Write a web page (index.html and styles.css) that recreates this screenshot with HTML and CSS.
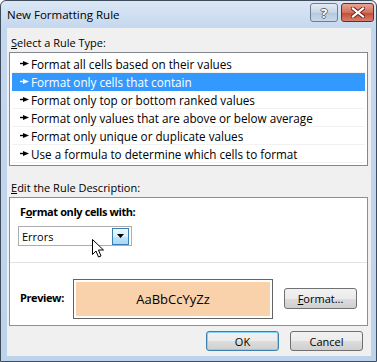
FILE: index.html
```html
<!DOCTYPE html>
<html lang="en">

<head>
    <meta charset="utf-8">
    <title>New Formatting Rule</title>
    <link rel="stylesheet" href="styles.css">
</head>

<body>

    <div class="window">
        <div class="titlebar">
            <span class="title">New Formatting Rule</span>
            <div class="caption-btns">
                <div class="cap help">?</div>
                <div class="cap close">
                    <svg width="14" height="11" viewBox="0 0 14 11">
                        <path d="M2 1.5 L12 9.5 M12 1.5 L2 9.5" stroke="#6b2020" stroke-width="4" stroke-linecap="square" />
                        <path d="M2 1.5 L12 9.5 M12 1.5 L2 9.5" stroke="#ffffff" stroke-width="2.2" stroke-linecap="square" />
                    </svg>
                </div>
            </div>
        </div>

        <div class="client">
            <div class="group-label"><u>S</u>elect a Rule Type:</div>
            <ul class="rule-list">
                <li><svg class="bullet" width="9" height="5" viewBox="0 0 9 5"><path d="M0 2.5 H4" stroke="currentColor" stroke-width="1.4" /><path d="M3 0 L9 2.5 L3 5 Z" fill="currentColor" /></svg>Format all cells based on their values</li>
                <li class="selected"><svg class="bullet" width="9" height="5" viewBox="0 0 9 5"><path d="M0 2.5 H4" stroke="currentColor" stroke-width="1.4" /><path d="M3 0 L9 2.5 L3 5 Z" fill="currentColor" /></svg>Format only cells that contain</li>
                <li><svg class="bullet" width="9" height="5" viewBox="0 0 9 5"><path d="M0 2.5 H4" stroke="currentColor" stroke-width="1.4" /><path d="M3 0 L9 2.5 L3 5 Z" fill="currentColor" /></svg>Format only top or bottom ranked values</li>
                <li><svg class="bullet" width="9" height="5" viewBox="0 0 9 5"><path d="M0 2.5 H4" stroke="currentColor" stroke-width="1.4" /><path d="M3 0 L9 2.5 L3 5 Z" fill="currentColor" /></svg>Format only values that are above or below average</li>
                <li><svg class="bullet" width="9" height="5" viewBox="0 0 9 5"><path d="M0 2.5 H4" stroke="currentColor" stroke-width="1.4" /><path d="M3 0 L9 2.5 L3 5 Z" fill="currentColor" /></svg>Format only unique or duplicate values</li>
                <li><svg class="bullet" width="9" height="5" viewBox="0 0 9 5"><path d="M0 2.5 H4" stroke="currentColor" stroke-width="1.4" /><path d="M3 0 L9 2.5 L3 5 Z" fill="currentColor" /></svg>Use a formula to determine which cells to format</li>
            </ul>

            <div class="group-label desc-label"><u>E</u>dit the Rule Description:</div>
            <div class="desc-box">
                <div class="desc-top">
                    <div class="bold-label">F<u>o</u>rmat only cells with:</div>
                    <div class="combo">
                        <span>Errors</span>
                        <div class="drop">
                            <svg width="7" height="4" viewBox="0 0 7 4"><path d="M0 0 H7 L3.5 4 Z" fill="#000" /></svg>
                        </div>
                    </div>
                </div>
                <div class="desc-bottom">
                    <span class="bold-label preview-label">Preview:</span>
                    <div class="preview">
                        <div class="preview-fill">AaBbCcYyZz</div>
                    </div>
                    <div class="btn format-btn"><u>F</u>ormat...</div>
                </div>
                <svg class="cursor" width="13" height="20" viewBox="0 0 13 20">
                    <path d="M0.5 0.5 L0.5 15.5 L4 12 L6.5 18 L9 17 L6.5 11 L11.5 11 Z" fill="#fff" stroke="#000" stroke-width="1" stroke-linejoin="miter" />
                </svg>
            </div>

            <div class="actions">
                <div class="btn ok">OK</div>
                <div class="btn">Cancel</div>
            </div>
        </div>
    </div>

</body>

</html>
```

FILE: styles.css
```css
body {
    margin: 0;
    font-family: "Open Sans", "Noto Sans", sans-serif;
    font-size: 11px;
    color: #000;
}

.window {
    width: 377px;
    height: 362px;
    box-sizing: border-box;
    border: 1px solid #3e4c5e;
    border-radius: 6px 6px 0 0;
    background: linear-gradient(#dbe7f5, #c4d7ee 28px, #bcd3ec);
    display: flex;
    flex-direction: column;
}

.titlebar {
    height: 27px;
    display: flex;
    align-items: flex-start;
    padding: 0 2px 0 6px;
}

.title {
    font-size: 11.5px;
    line-height: 27px;
}

.caption-btns {
    margin-left: auto;
    margin-top: 2px;
    display: flex;
    gap: 3px;
}

.cap {
    height: 19px;
    box-sizing: border-box;
    border: 1px solid #6d7f96;
    border-radius: 3px;
    display: flex;
    justify-content: center;
    align-items: center;
}

.help {
    width: 28px;
    background: linear-gradient(#e4ecf5, #c6d5e6 50%, #b4c7dd 51%, #c9d8ea);
    color: #fff;
    font-weight: bold;
    font-size: 13px;
    text-shadow: -1px 0 #5a6a80, 1px 0 #5a6a80, 0 -1px #5a6a80, 0 1px #5a6a80;
}

.close {
    width: 33px;
    border-color: #6e2a2a;
    background: linear-gradient(#e8a493, #d2705c 50%, #c24a33 51%, #d77f6b);
}

.client {
    flex: 1;
    margin: 0 5px 5px 6px;
    background: #f0f0f0;
    padding: 7px 3px 0 2px;
}

.group-label {
    line-height: 16px;
    padding-left: 2px;
    margin-bottom: 1px;
}

.rule-list {
    list-style: none;
    margin: 0;
    padding: 2px;
    background: #fff;
    border: 1px solid #828790;
    font-size: 11.7px;
}

.rule-list li {
    height: 18px;
    box-sizing: border-box;
    border-bottom: 1px solid #f2f2f2;
    display: flex;
    align-items: center;
    padding-left: 8px;
}

.rule-list li.selected {
    background: #3399ff;
    color: #fff;
    border-bottom-color: #3399ff;
}

.bullet {
    margin-right: 2px;
}

.desc-label {
    margin-top: 14px;
}

.desc-box {
    position: relative;
    background: #fff;
    border: 1px solid #8e8f8f;
}

.desc-top {
    height: 65px;
    box-sizing: border-box;
    border-bottom: 1px solid #e3e3e3;
    padding: 6px 0 0 8px;
}

.bold-label {
    font-weight: bold;
    line-height: 16px;
    padding-left: 2px;
    letter-spacing: -0.4px;
}

.combo {
    margin-top: 6px;
    width: 114px;
    height: 20px;
    box-sizing: border-box;
    border: 1px solid #abadb3;
    display: flex;
    align-items: center;
    padding: 0 2px 0 3px;
}

.drop {
    margin-left: auto;
    width: 17px;
    height: 17px;
    box-sizing: border-box;
    border: 1px solid #3c7fb1;
    background: linear-gradient(#eaf6fd, #d9f0fc 50%, #bee6fd 51%, #a7d9f5);
    display: flex;
    justify-content: center;
    align-items: center;
}

.desc-bottom {
    height: 62px;
    box-sizing: border-box;
    display: flex;
    align-items: flex-start;
    padding: 16px 0 0 8px;
}

.preview-label {
    width: 53px;
    margin-top: 11px;
}

.preview {
    width: 200px;
    height: 40px;
    box-sizing: border-box;
    border: 1px solid #646464;
    padding: 2px;
}

.preview-fill {
    height: 100%;
    background: #f9d1ab;
    display: flex;
    justify-content: center;
    align-items: center;
    font-size: 13px;
}

.btn {
    height: 20px;
    box-sizing: border-box;
    border: 1px solid #707070;
    border-radius: 3px;
    background: linear-gradient(#f2f2f2, #ebebeb 50%, #dddddd 51%, #cfcfcf);
    display: flex;
    justify-content: center;
    align-items: center;
    width: 73px;
}

.format-btn {
    margin-left: 11px;
    margin-top: 9px;
    height: 21px;
}

.cursor {
    position: absolute;
    left: 82px;
    top: 41px;
}

.actions {
    display: flex;
    justify-content: flex-end;
    gap: 11px;
    margin-top: 5px;
    padding-right: 5px;
}

.ok {
    border-color: #3c7fb1;
    box-shadow: inset 0 0 0 1px #7fd3f8;
}
```
